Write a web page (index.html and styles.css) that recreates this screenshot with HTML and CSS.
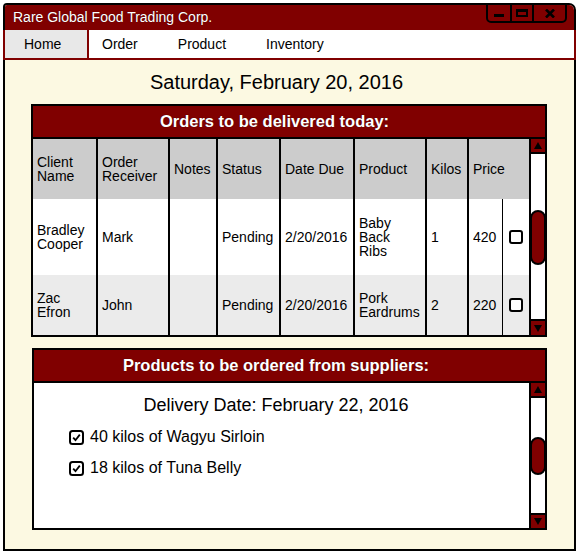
FILE: index.html
```html
<!DOCTYPE html>
<html>
<head>
<meta charset="utf-8">
<link rel="stylesheet" href="styles.css">
</head>
<body>
<div class="window">
  <div class="titlebar">
    <span class="title">Rare Global Food Trading Corp.</span>
    <div class="controls">
      <div class="ctl ctl-min"><span class="min-bar"></span></div>
      <div class="ctl ctl-max"><span class="max-box"></span></div>
      <div class="ctl ctl-close">
        <svg width="10" height="9" viewBox="0 0 10 9"><path d="M1 0.5 L9 8.5 M9 0.5 L1 8.5" stroke="#000" stroke-width="2.6" fill="none"/></svg>
      </div>
    </div>
  </div>
  <nav class="tabs">
    <div class="tab active">Home</div>
    <div class="tab-group">
      <div class="tab">Order</div>
      <div class="tab">Product</div>
      <div class="tab">Inventory</div>
    </div>
  </nav>
  <main class="content">
    <div class="date">Saturday, February 20, 2016</div>

    <section class="panel orders">
      <div class="panel-head head-orders">Orders to be delivered today:</div>
      <div class="panel-body">
        <div class="grid">
          <div class="cell hd">Client<br>Name</div>
          <div class="cell hd">Order<br>Receiver</div>
          <div class="cell hd">Notes</div>
          <div class="cell hd">Status</div>
          <div class="cell hd">Date Due</div>
          <div class="cell hd">Product</div>
          <div class="cell hd">Kilos</div>
          <div class="cell hd price-h">Price</div>

          <div class="cell">Bradley<br>Cooper</div>
          <div class="cell">Mark</div>
          <div class="cell"></div>
          <div class="cell">Pending</div>
          <div class="cell">2/20/2016</div>
          <div class="cell">Baby<br>Back<br>Ribs</div>
          <div class="cell">1</div>
          <div class="cell thin">420</div>
          <div class="cell chk-cell"><span class="box"></span></div>

          <div class="cell r2">Zac<br>Efron</div>
          <div class="cell r2">John</div>
          <div class="cell r2"></div>
          <div class="cell r2">Pending</div>
          <div class="cell r2">2/20/2016</div>
          <div class="cell r2">Pork<br>Eardrums</div>
          <div class="cell r2">2</div>
          <div class="cell r2 thin">220</div>
          <div class="cell r2 chk-cell"><span class="box"></span></div>
        </div>
        <div class="scroll">
          <div class="sb-btn sb-up"><span class="tri-up"></span></div>
          <div class="thumb thumb-orders"></div>
          <div class="sb-btn sb-down sb-down-orders"><span class="tri-down"></span></div>
        </div>
      </div>
    </section>

    <section class="panel products">
      <div class="panel-head head-products">Products to be ordered from suppliers:</div>
      <div class="panel-body">
        <div class="prod-main">
          <div class="delivery">Delivery Date: February 22, 2016</div>
          <div class="items">
            <div class="item">
              <svg class="cb" width="15" height="15" viewBox="0 0 15 15"><rect x="1" y="1" width="13" height="13" rx="2.5" fill="#fff" stroke="#000" stroke-width="2"/><path d="M4.2 7.6 L6.5 10.2 L10.8 4.6" fill="none" stroke="#000" stroke-width="1.8"/></svg>
              <span>40 kilos of Wagyu Sirloin</span>
            </div>
            <div class="item">
              <svg class="cb" width="15" height="15" viewBox="0 0 15 15"><rect x="1" y="1" width="13" height="13" rx="2.5" fill="#fff" stroke="#000" stroke-width="2"/><path d="M4.2 7.6 L6.5 10.2 L10.8 4.6" fill="none" stroke="#000" stroke-width="1.8"/></svg>
              <span>18 kilos of Tuna Belly</span>
            </div>
          </div>
        </div>
        <div class="scroll scroll-products">
          <div class="sb-btn sb-up"><span class="tri-up"></span></div>
          <div class="thumb thumb-products"></div>
          <div class="sb-btn sb-down sb-down-products"><span class="tri-down"></span></div>
        </div>
      </div>
    </section>
  </main>
</div>
</body>
</html>
```
FILE: styles.css
```css
body {
  margin: 0;
  background: #fff;
  font-family: "Liberation Sans", Arial, Helvetica, sans-serif;
  color: #000;
}

.window {
  margin: 3px 0 0 3px;
  width: 573px;
  height: 548px;
  box-sizing: border-box;
  border: 2px solid #000;
  border-radius: 4px 7px 0 0;
  background: #fcf9e2;
  display: flex;
  flex-direction: column;
}

.titlebar {
  height: 25px;
  flex: none;
  background: #800000;
  border-radius: 2px 5px 0 0;
  display: flex;
  justify-content: space-between;
  align-items: flex-start;
}

.title {
  color: #fff;
  font-size: 14px;
  line-height: 25px;
  padding-left: 8px;
  text-shadow: 0 0 1px rgba(0,0,0,0.6);
}

.controls {
  display: flex;
  margin-top: -2px;
  margin-right: 7px;
  height: 20px;
  box-sizing: border-box;
  border: 2px solid #000;
  border-radius: 0 0 5px 5px;
  background: #800000;
}

.ctl {
  height: 16px;
  display: flex;
  align-items: center;
  justify-content: center;
}

.ctl + .ctl {
  border-left: 2px solid #000;
}

.ctl-min {
  width: 22px;
  align-items: flex-end;
}

.min-bar {
  width: 10px;
  height: 3px;
  background: #000;
  margin-bottom: 4px;
}

.ctl-max {
  width: 20px;
}

.max-box {
  width: 12px;
  height: 8px;
  box-sizing: border-box;
  border: 2px solid #000;
  border-top-width: 3px;
}

.ctl-close {
  width: 31px;
}

.tabs {
  flex: none;
  display: flex;
  height: 28px;
  margin: 0 -2px;
  border: 2px solid #800000;
  border-top: 0;
  background: #fff;
  font-size: 14px;
}

.tab {
  line-height: 28px;
}

.tab.active {
  width: 84px;
  box-sizing: border-box;
  padding-left: 19px;
  background: #e8e8e8;
  border-right: 2px solid #800000;
}

.tab-group {
  display: flex;
  gap: 40px;
  padding-left: 13px;
}

.content {
  flex: 1;
  padding-top: 10px;
}

.date {
  font-size: 20px;
  line-height: 24px;
  text-align: center;
  padding-right: 26px;
}

.panel {
  border: 2px solid #000;
  background: #fff;
}

.orders {
  margin: 10px 27px 0 26px;
}

.products {
  margin: 11px 27px 0 27px;
}

.panel-head {
  height: 31px;
  line-height: 31px;
  background: #800000;
  color: #fff;
  font-weight: bold;
  font-size: 16.5px;
  text-align: center;
  border-bottom: 2px solid #000;
  text-shadow: 0 0 1px rgba(0,0,0,0.6);
}

.head-orders {
  padding-right: 29px;
}

.head-products {
  padding-right: 27px;
}

.panel-body {
  display: flex;
}

.grid {
  display: grid;
  grid-template-columns: 65px 72px 48px 63px 74px 72px 42px 34px 26px;
  grid-template-rows: 60px 76px 60px;
  width: 496px;
  flex: none;
  font-size: 14px;
  line-height: 14px;
}

.cell {
  display: flex;
  align-items: center;
  padding-left: 4px;
  border-right: 2px solid #000;
  box-sizing: border-box;
  background: #fff;
}

.hd {
  background: #cccccc;
}

.r2 {
  background: #ebebeb;
}

.cell.thin {
  border-right-width: 1px;
}

.price-h {
  grid-column: span 2;
  border-right: 0;
}

.chk-cell {
  justify-content: center;
  padding-left: 0;
  border-right: 0;
}

.box {
  width: 14px;
  height: 14px;
  box-sizing: border-box;
  border: 2px solid #000;
  border-radius: 3px;
  background: #fff;
}

.scroll {
  width: 16px;
  flex: none;
  box-sizing: border-box;
  border-left: 2px solid #000;
  position: relative;
  background: #fff;
  display: flex;
  flex-direction: column;
  justify-content: space-between;
}

.sb-btn {
  background: #800000;
  display: flex;
  align-items: center;
  justify-content: center;
  box-sizing: border-box;
}

.sb-up {
  height: 15px;
  border-bottom: 2px solid #000;
}

.sb-down {
  border-top: 2px solid #000;
}

.sb-down-orders {
  height: 16px;
}

.sb-down-products {
  height: 15px;
}

.tri-up {
  width: 0;
  height: 0;
  border-left: 4px solid transparent;
  border-right: 4px solid transparent;
  border-bottom: 7px solid #000;
}

.tri-down {
  width: 0;
  height: 0;
  border-left: 4px solid transparent;
  border-right: 4px solid transparent;
  border-top: 7px solid #000;
}

.thumb {
  position: absolute;
  left: -1px;
  width: 16px;
  box-sizing: border-box;
  border: 2px solid #000;
  border-radius: 8px;
  background: #800000;
}

.thumb-orders {
  top: 71px;
  height: 55px;
}

.thumb-products {
  top: 54px;
  height: 38px;
}

.prod-main {
  flex: 1;
  height: 145px;
  padding-top: 11px;
  box-sizing: border-box;
}

.delivery {
  font-size: 18px;
  line-height: 22px;
  text-align: center;
  padding-right: 11px;
}

.items {
  padding-left: 35px;
  margin-top: 11px;
  display: flex;
  flex-direction: column;
  gap: 11px;
}

.item {
  display: flex;
  align-items: center;
  gap: 6px;
  font-size: 16px;
  line-height: 20px;
}

.cb {
  flex: none;
}
```
